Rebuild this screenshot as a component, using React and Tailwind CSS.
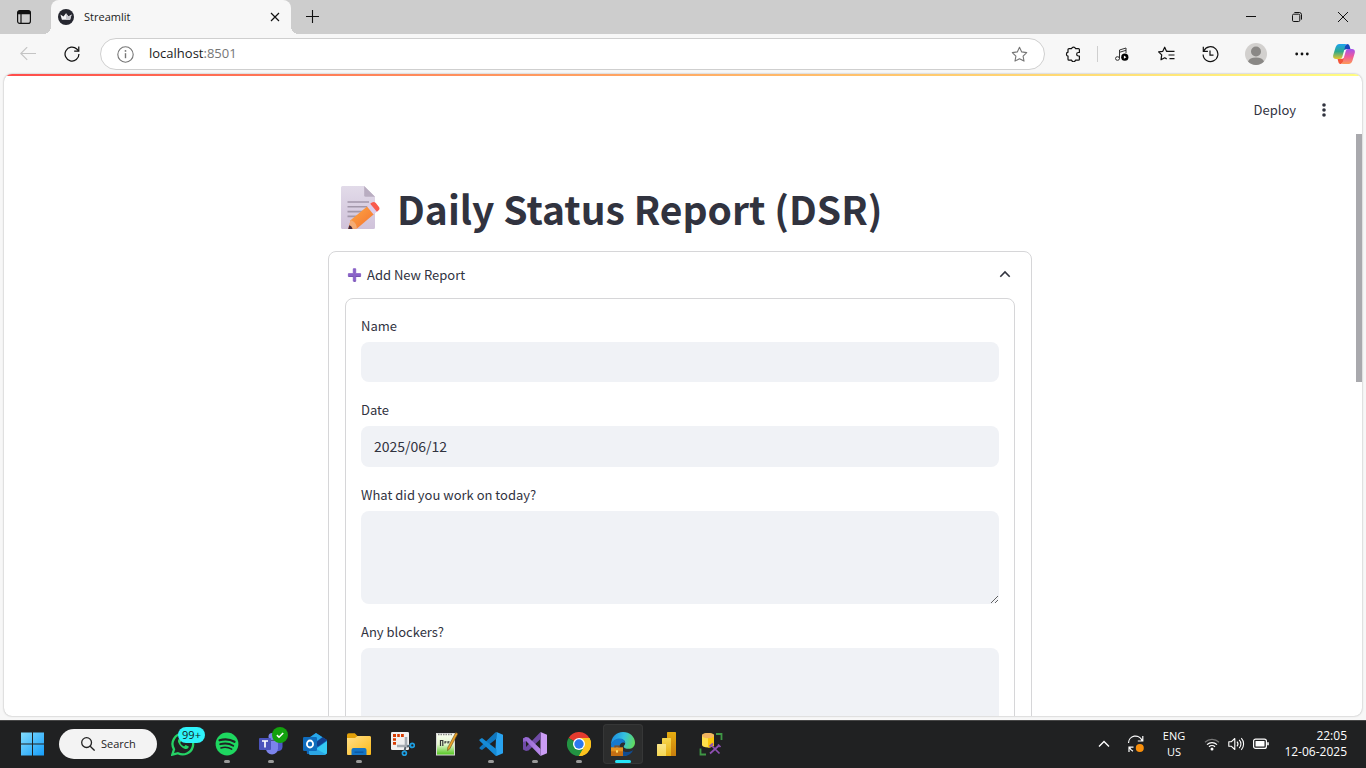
import React, { useState } from "react";

const sans = "font-['Open_Sans','Noto_Sans',sans-serif]";
const source = "font-['Noto_Sans_CJK_SC',sans-serif]";

/* ---------- browser chrome ---------- */

function TabStrip() {
  return (
    <div className="flex h-[34px] shrink-0 items-stretch bg-[#cdcdcd]">
      <button aria-label="Tab actions" className="flex w-[43px] items-center justify-center pl-[5px]">
        <svg width="16" height="16" viewBox="0 0 16 16" fill="none" stroke="#111">
          <rect x="1.6" y="1.6" width="12.8" height="12.8" rx="2.2" strokeWidth="1.2" />
          <path d="M1.5 5.2V3.6a2 2 0 0 1 2-2h9a2 2 0 0 1 2 2v1.6z" fill="#111" stroke="none" />
          <path d="M5 5v9.4" strokeWidth="1.2" />
        </svg>
      </button>
      <span className="size-2 self-end bg-[radial-gradient(circle_at_0_0,transparent_8px,#f7f7f7_8px)]" />
      <div className="flex w-60 items-center rounded-t-lg bg-[#f7f7f7] pl-[7px] pr-2">
        <svg width="16" height="16" viewBox="0 0 16 16">
          <circle cx="8" cy="8" r="8" fill="#262730" />
          <path d="M2.4 5.6 5.5 7.4 8 4.2l2.5 3.2 3.1-1.8-1.5 5.2H3.9z" fill="#f4f4f6" />
          <path d="M8 4.2l2.5 3.2 3.1-1.8-1.5 5.2H8z" fill="#c9c9d0" />
        </svg>
        <span className="ml-[10px] flex-1 text-[11px] text-[#1b1b1b]">Streamlit</span>
        <button aria-label="Close tab" className="flex size-4 items-center justify-center">
          <svg width="10" height="10" viewBox="0 0 10 10" stroke="#111" strokeWidth="1.2">
            <path d="M1 1l8 8M9 1l-8 8" />
          </svg>
        </button>
      </div>
      <span className="size-2 self-end bg-[radial-gradient(circle_at_100%_0,transparent_8px,#f7f7f7_8px)]" />
      <button aria-label="New tab" className="flex w-7 items-center justify-center">
        <svg width="14" height="14" viewBox="0 0 14 14" stroke="#111" strokeWidth="1.1">
          <path d="M6.5 0v13M0 6.500h13" />
        </svg>
      </button>
      <div className="ml-auto flex">
        <button aria-label="Minimize" className="flex w-[46px] items-center justify-center">
          <svg width="10" height="10" viewBox="0 0 10 10" stroke="#111">
            <path d="M0 4.5h10" />
          </svg>
        </button>
        <button aria-label="Restore" className="flex w-[46px] items-center justify-center">
          <svg width="10" height="10" viewBox="0 0 10 10" stroke="#111" fill="none">
            <rect x=".5" y="2.2" width="7.3" height="7.3" rx="1.2" />
            <path d="M2.4.5h4.8a2.3 2.3 0 0 1 2.3 2.3v4.8" />
          </svg>
        </button>
        <button aria-label="Close" className="flex w-[46px] items-center justify-center">
          <svg width="10" height="10" viewBox="0 0 10 10" stroke="#111">
            <path d="M0 0l10 10M10 0L0 10" />
          </svg>
        </button>
      </div>
    </div>
  );
}

function ToolButton({ label, wide, children }) {
  return (
    <button
      aria-label={label}
      className={(wide ? "w-12" : "w-11") + " flex shrink-0 items-center justify-center"}
    >
      {children}
    </button>
  );
}

const STAR = "M8.5 1.3l2.2 4.6 5 .7-3.6 3.5.9 5-4.5-2.4L4 15.100l.9-5L1.300 6.600l5-.7z";

function Toolbar() {
  return (
    <div className="flex h-10 shrink-0 items-center bg-[#f7f7f7] pl-[6px] pr-[2px]">
      <button aria-label="Back" className="flex w-11 items-center justify-center">
        <svg width="16" height="14" viewBox="0 0 16 14" fill="none" stroke="#c4c4c4" strokeWidth="1.1">
          <path d="M16 6.500H.8M7.200.1L.8 6.500l6.400 6.400" />
        </svg>
      </button>
      <button aria-label="Refresh" className="flex w-11 items-center justify-center">
        <svg width="16" height="16" viewBox="0 0 17 17" fill="none" stroke="#111" strokeWidth="1.3">
          <path d="M15.900 8.500a7.400 7.400 0 1 1-2.300-5.300l1.900 2" />
          <path d="M15.700.5v4.900h-4.900" />
        </svg>
      </button>
      <div className="ml-[6px] flex h-8 min-w-0 flex-1 items-center rounded-full border border-[#cfcfcf] bg-white pl-4 pr-4">
        <svg width="17" height="17" viewBox="0 0 17 17" fill="none" stroke="#767676">
          <circle cx="8.500" cy="8.500" r="7.700" strokeWidth="1.100" />
          <path d="M8.500 7.200v5" strokeWidth="1.400" />
          <circle cx="8.500" cy="4.900" r=".9" fill="#767676" stroke="none" />
        </svg>
        <span className="ml-[15px] flex-1 text-[13px] text-[#1b1b1b]">
          localhost<span className="text-[#767676]">:8501</span>
        </span>
        <button aria-label="Add to favorites">
          <svg width="17" height="17" viewBox="0 0 17 17" fill="none" stroke="#767676" strokeWidth="1.100" strokeLinejoin="round">
            <path d={STAR} />
          </svg>
        </button>
      </div>
      <span className="w-[6px]" />
      <ToolButton label="Extensions">
        <svg width="16" height="16" viewBox="0 0 16 16" fill="none" stroke="#111" strokeWidth="1.200" strokeLinejoin="round">
          <path d="M4 2.600h2.600a2 2 0 0 1 3.900 0h2.900a1 1 0 0 1 1 1v2.900h-1a1.700 1.700 0 0 0 0 3.500h1v3.200a1 1 0 0 1-1 1h-2.900a2 2 0 0 1-3.900 0H4a1 1 0 0 1-1-1V10.100a2 2 0 0 1 0-3.900V3.600a1 1 0 0 1 1-1z" />
        </svg>
      </ToolButton>
      <span className="ml-[2px] mr-[2px] h-4 w-px bg-[#cfcfcf]" />
      <ToolButton label="Media">
        <svg width="14" height="14" viewBox="0 0 14 14" fill="none" stroke="#333">
          <ellipse cx="2.500" cy="11.500" rx="2" ry="1.800" />
          <path d="M4.500 11.500V3l6.500-2v5M4.500 5.300l6.500-2" />
          <circle cx="9.800" cy="10.200" r="3.600" fill="#000" stroke="none" />
          <path d="M8.900 8.600v3.200l2.500-1.600z" fill="#fff" stroke="none" />
        </svg>
      </ToolButton>
      <ToolButton label="Favorites">
        <svg width="17" height="16" viewBox="0 0 17 16" fill="none" stroke="#111" strokeWidth="1.200" strokeLinejoin="round">
          <path d="M9.500 5.300h-1L6.700 1.200 4.800 5.300l-4.200.6 3.100 3-.7 4.900 3.700-2 2 1.100" />
          <path d="M9 5.400h7.500M10.500 9h6M11.500 12.600h5" />
        </svg>
      </ToolButton>
      <ToolButton label="History">
        <svg width="17" height="17" viewBox="0 0 17 17" fill="none" stroke="#111" strokeWidth="1.200">
          <path d="M1.700 5.200a7.400 7.400 0 1 1-.6 3.200" />
          <path d="M1.300.8v4.600h4.600M8 4.500v4.700h3.500" />
        </svg>
      </ToolButton>
      <ToolButton label="Profile" wide>
        <svg width="22" height="22" viewBox="0 0 22 22">
          <circle cx="11" cy="11" r="11" fill="#d2d0ce" />
          <circle cx="11" cy="8.500" r="5" fill="#8a8886" />
          <path d="M3 18.600c1-2.900 3.600-4.200 8-4.200s7 1.300 8 4.200A11 11 0 0 1 11 22a11 11 0 0 1-8-3.400z" fill="#8a8886" />
        </svg>
      </ToolButton>
      <ToolButton label="Settings and more">
        <svg width="14" height="4" viewBox="0 0 14 4" fill="#111">
          <circle cx="1.700" cy="2" r="1.400" />
          <circle cx="7" cy="2" r="1.400" />
          <circle cx="12.300" cy="2" r="1.400" />
        </svg>
      </ToolButton>
      <button aria-label="Copilot" className="flex w-10 shrink-0 items-center justify-center">
        <svg width="22" height="20" viewBox="0 0 22 20">
          <defs>
            <linearGradient id="cpA" x1="0" y1="0" x2="0" y2="1">
              <stop offset="0" stopColor="#1da4f0" />
              <stop offset=".5" stopColor="#2ea98c" />
              <stop offset="1" stopColor="#e9c52c" />
            </linearGradient>
            <linearGradient id="cpB" x1="0" y1="0" x2="0" y2="1">
              <stop offset="0" stopColor="#a452ee" />
              <stop offset=".5" stopColor="#ee5a9b" />
              <stop offset="1" stopColor="#fd9a55" />
            </linearGradient>
          </defs>
          <path d="M14 0c1.500 0 2.200.8 2.600 2.100l.9 3.100h-4.300c-1.500 0-2.300.8-2.800 2.400L9 4z" fill="#1747bd" />
          <path d="M8 20c-1.500 0-2.200-.8-2.600-2.100l-.9-3.100h4.300c1.500 0 2.300-.8 2.800-2.400L13 16z" fill="#f3553a" />
          <path d="M14 0H6.500C4.300 0 3.200 1.500 2.500 3.600L.4 10.500C-.5 13.500.6 15 3 15h3.500c1.700 0 2.400-.9 2.900-2.500l2.500-9C12.400 1.200 12.600 0 14 0z" fill="url(#cpA)" />
          <path d="M8 20h7.500c2.200 0 3.300-1.500 4-3.600l2.100-6.900C22.500 6.500 21.400 5 19 5h-3.500c-1.700 0-2.400.9-2.900 2.500l-2.500 9C9.600 18.800 9.400 20 8 20z" fill="url(#cpB)" />
        </svg>
      </button>
    </div>
  );
}

/* ---------- page ---------- */

function MemoIcon() {
  return (
    <svg width="40" height="44" viewBox="0 0 40 44" aria-hidden="true">
      <defs>
        <linearGradient id="paper" x1="0" y1="0" x2="0" y2="1">
          <stop offset="0" stopColor="#e2dbe9" />
          <stop offset="1" stopColor="#d0c2da" />
        </linearGradient>
        <linearGradient id="pencil" x1="0" y1="0" x2="1" y2="1">
          <stop offset="0" stopColor="#ffab45" />
          <stop offset="1" stopColor="#f3702f" />
        </linearGradient>
      </defs>
      <path d="M1.500 0h21.700L34 10.800v30.700a1.500 1.500 0 0 1-1.500 1.500h-31A1.500 1.500 0 0 1 0 41.500v-40A1.500 1.500 0 0 1 1.500 0z" fill="url(#paper)" />
      <path d="M23.200 0 34 10.800h-9.300a1.500 1.500 0 0 1-1.500-1.500z" fill="#b9adc1" />
      <path d="M6.500 16h21.500M6.500 20.800h20M6.500 25.600h15.500M6.500 30.400h10" stroke="#a297aa" strokeWidth="1.600" />
      <path d="M9.500 34.200 27 19.800l6.400 8-17.400 14.700-8.400.5z" fill="url(#pencil)" />
      <path d="M7.200 43l2.300-8.800c3.600.6 6.300 4 6.400 8.600z" fill="#f4ab74" />
      <path d="M7.200 43l1-3.800c1.600.4 3 1.800 3.400 3.800z" fill="#45283c" />
      <path d="M26 20.600l3.800-3.300 6.600 7.900-3.900 3.400z" fill="#dccdeb" />
      <path d="M29.200 17.800l1.700-1.200c1.400-1 2.800-.8 3.900.5l3 3.600c1.100 1.400.9 2.700-.4 3.800l-1.500 1.300z" fill="#f95b4e" />
    </svg>
  );
}

function Field({ id, label, children }) {
  return (
    <div className="flex flex-col gap-1">
      <label htmlFor={id} className="text-[13px] leading-6">
        {label}
      </label>
      {children}
    </div>
  );
}

function StatusPage() {
  const [open, setOpen] = useState(true);
  return (
    <div className={source + " mx-1 mb-1 flex min-h-0 flex-1 flex-col overflow-hidden rounded-lg bg-white text-[#31333f] shadow-[0_0_2px_rgba(0,0,0,0.35)]"}>
      <div className="h-[2px] shrink-0 bg-linear-to-r from-[#ff4b4b] to-[#fffd80]" />
      <header className="flex h-[58px] shrink-0 items-center justify-end gap-4 pr-[26px] pt-[10px]">
        <button className="h-6 text-[13px] leading-6">Deploy</button>
        <button aria-label="Main menu" className="flex size-6 items-center justify-center">
          <svg width="4" height="14" viewBox="0 0 4 14" fill="#31333f">
            <circle cx="2" cy="2" r="1.800" />
            <circle cx="2" cy="7" r="1.800" />
            <circle cx="2" cy="12" r="1.800" />
          </svg>
        </button>
      </header>
      <div className="flex min-h-0 flex-1">
        <main className="min-w-0 flex-1 overflow-hidden">
          <div className="mx-auto max-w-[704px] pt-[45px]">
            <h1 className="flex h-[72px] items-start gap-4 pl-[13px] pt-[7px] text-[39px] font-bold leading-[44px]">
              <MemoIcon />
              <span className="flex-1">Daily Status Report (DSR)</span>
            </h1>
            <section className="rounded-lg border border-[#d6d6d8] px-4 pb-4">
              <button
                onClick={() => setOpen(!open)}
                aria-expanded={open}
                className="flex h-[46px] w-full items-center text-left text-[13px]"
              >
                <svg width="18" height="14" viewBox="0 0 18 14" aria-hidden="true">
                  <path d="M8.300.8h2.400v4.900h4.900v2.600h-4.900v4.900H8.300V8.300H3.400V5.700h4.900z" fill="#8a63c7" stroke="#8a63c7" strokeLinejoin="round" />
                  <path d="M3.500 8.500h5M10.500 8.500h5M9 13.300h1.500" stroke="#6b4aa8" strokeWidth=".8" />
                </svg>
                <span className="ml-1 flex-1">Add New Report</span>
                <svg width="20" height="10" viewBox="0 0 20 10" fill="none" stroke="#31333f" strokeWidth="1.600">
                  <path d="M5.300 6.700 10 2l4.700 4.700" />
                </svg>
              </button>
              {open && (
                <form className="flex flex-col gap-4 rounded-lg border border-[#d6d6d8] p-[15px]" onSubmit={(e) => e.preventDefault()}>
                  <Field id="name" label="Name">
                    <input id="name" type="text" className="h-10 w-full rounded-lg bg-[#f0f2f6] px-[13px] pb-[2px] text-[14px]" />
                  </Field>
                  <Field id="date" label="Date">
                    <input id="date" type="text" defaultValue="2025/06/12" className="h-[41px] w-full rounded-lg bg-[#f0f2f6] px-[13px] pb-[2px] text-[14px]" />
                  </Field>
                  <Field id="work" label="What did you work on today?">
                    <textarea id="work" className="h-[93px] w-full resize-y rounded-lg bg-[#f0f2f6] px-[13px] py-2 text-[14px]" />
                  </Field>
                  <Field id="blockers" label="Any blockers?">
                    <textarea id="blockers" className="h-[93px] w-full resize-y rounded-lg bg-[#f0f2f6] px-[13px] py-2 text-[14px]" />
                  </Field>
                </form>
              )}
            </section>
          </div>
        </main>
        <div className="w-[6px] shrink-0">
          <div className="h-[248px] bg-[#a9a9ad]" />
        </div>
      </div>
    </div>
  );
}

/* ---------- taskbar ---------- */

function TaskItem({ label, state, badge, children }) {
  return (
    <button aria-label={label} className="relative flex h-full w-11 shrink-0 items-center justify-center">
      <span className={(state === "active" ? "bg-[#2c2d2d] ring-1 ring-inset ring-[#363737]" : "") + " flex size-10 flex-col items-center rounded pt-2"}>
        <svg width="24" height="24" viewBox="0 0 24 24" aria-hidden="true">
          {children}
        </svg>
        {state === "running" && <span className="mt-1 h-[3px] w-[6px] rounded-full bg-[#9a9a9a]" />}
        {state === "active" && <span className="mt-1 h-[3px] w-4 rounded-full bg-[#27e4f7]" />}
      </span>
      {badge}
    </button>
  );
}

function Gradients() {
  return (
    <svg className="absolute size-0" aria-hidden="true">
      <defs>
        <linearGradient id="win" x1="0" y1="0" x2="1" y2="1">
          <stop offset="0" stopColor="#82dcfd" />
          <stop offset="1" stopColor="#159dfa" />
        </linearGradient>
        <linearGradient id="folder" x1="0" y1="0" x2="1" y2="1">
          <stop offset="0" stopColor="#ffe08a" />
          <stop offset="1" stopColor="#fbb918" />
        </linearGradient>
        <linearGradient id="edgeTop" x1="0" y1=".4" x2="1" y2=".6">
          <stop offset="0" stopColor="#1c8de0" />
          <stop offset=".5" stopColor="#35c1e0" />
          <stop offset="1" stopColor="#62dc5a" />
        </linearGradient>
        <linearGradient id="vsPurple" x1="0" y1="0" x2="1" y2="0">
          <stop offset="0" stopColor="#8f62cc" />
          <stop offset="1" stopColor="#b98aec" />
        </linearGradient>
        <linearGradient id="npp" x1="0" y1="0" x2="0" y2="1">
          <stop offset="0" stopColor="#fbfff2" />
          <stop offset=".5" stopColor="#e4f7cf" />
          <stop offset="1" stopColor="#4fc51b" />
        </linearGradient>
        <linearGradient id="pbiA" x1="0" y1="0" x2="0" y2="1">
          <stop offset="0" stopColor="#e6ad10" />
          <stop offset="1" stopColor="#c87e0e" />
        </linearGradient>
        <linearGradient id="pbiB" x1="0" y1="0" x2="0" y2="1">
          <stop offset="0" stopColor="#f6d751" />
          <stop offset="1" stopColor="#e6ad10" />
        </linearGradient>
        <linearGradient id="pbiC" x1="0" y1="0" x2="0" y2="1">
          <stop offset="0" stopColor="#f9e589" />
          <stop offset="1" stopColor="#f6d751" />
        </linearGradient>
      </defs>
    </svg>
  );
}

function Taskbar() {
  return (
    <footer className="flex h-12 shrink-0 items-stretch bg-[#202122] pl-[10px] pr-[19px] text-white shadow-[inset_0_1px_0_#474747]">
      <Gradients />
      <TaskItem label="Start">
        <path d="M1 .500h11v11H1zM13 .500h11v11H13zM1 12.500h11v11H1zM13 12.500h11v11H13z" fill="url(#win)" />
      </TaskItem>
      <button className="ml-[5px] mr-1 flex h-[30px] w-[98px] items-center self-center rounded-full bg-[#f3f3f3] pl-[22px] text-[#1d1d1d]">
        <svg width="14" height="14" viewBox="0 0 14 14" fill="none" stroke="#222" strokeWidth="1.300">
          <circle cx="5.600" cy="5.600" r="4.900" />
          <path d="M9.200 9.200l4.400 4.400" />
        </svg>
        <span className="ml-[6px] text-[11px]">Search</span>
      </button>
      <TaskItem
        label="WhatsApp"
        badge={<span className="absolute left-[17px] top-[7px] flex h-4 w-[27px] items-center justify-center rounded-full bg-[#2ff3fa] text-[11px] text-[#122]">99+</span>}
      >
        <path d="M12 1.600A10.400 10.400 0 0 0 3 17.300L1.300 22.700l5.600-1.500A10.400 10.400 0 1 0 12 1.600z" fill="none" stroke="#25d366" strokeWidth="2.300" />
        <path d="M8.300 6.500c-1.300.8-1.700 2.300-.9 4.300 1.300 3 3.600 5.200 6.700 6.100 2 .5 3.500-.4 3.700-2.300l-3.200-1.700-1.500 1.500c-1.900-.8-3-2-3.900-3.700l1-1.300z" fill="#25d366" />
      </TaskItem>
      <TaskItem label="Spotify" state="running">
        <circle cx="12" cy="12" r="11.400" fill="#1ed760" />
        <path d="M4.500 8.300c5.200-1.500 10.600-1 15 1.500" stroke="#202124" strokeWidth="2.200" strokeLinecap="round" fill="none" />
        <path d="M5.200 12.200c4.600-1.300 9.200-.8 13 1.500" stroke="#202124" strokeWidth="1.900" strokeLinecap="round" fill="none" />
        <path d="M5.900 15.900c3.800-1 7.500-.7 10.800 1.200" stroke="#202124" strokeWidth="1.500" strokeLinecap="round" fill="none" />
      </TaskItem>
      <TaskItem
        label="Teams"
        state="running"
        badge={
          <svg width="16" height="16" viewBox="0 0 16 16" className="absolute left-[23px] top-[7px]" aria-hidden="true">
            <circle cx="8" cy="8" r="8" fill="#13a10e" />
            <path d="M4.900 8.100l2.100 2.100 4.200-4.200" fill="none" stroke="#fff" strokeWidth="1.600" />
          </svg>
        }
      >
        <circle cx="13" cy="4.500" r="3.500" fill="#7b83eb" />
        <path d="M15 8h8.500v7a4.600 4.600 0 0 1-8.500 2z" fill="#5059c9" />
        <path d="M7 8.500h12v8a6 6 0 0 1-12 0z" fill="#7b83eb" />
        <rect x="0" y="6" width="12" height="12" rx="1" fill="#4b53bc" />
        <path d="M3 9h6M6 9v6.600" stroke="#fff" strokeWidth="1.700" />
      </TaskItem>
      <TaskItem label="Outlook">
        <path d="M2.500 8 13 1l11 7v14H4z" fill="#1067bb" />
        <path d="M6 6l7-5 6.500 4.200-8 5.300z" fill="#28a8ea" />
        <path d="M11 12l8.500-6.800L24 8l-9 6.500z" fill="#123f8c" />
        <path d="M6 21.500 24 9v11.500a2 2 0 0 1-2 2H7z" fill="#35c9f4" />
        <path d="M6 13l17 9.300a2 2 0 0 1-1.500.7H7.500A1.500 1.500 0 0 1 6 21.500z" fill="#2ba6e5" />
        <rect x="0" y="5" width="14" height="14" rx="1.200" fill="#0f6cbd" />
        <ellipse cx="7" cy="12" rx="3.100" ry="3.500" fill="none" stroke="#fff" strokeWidth="1.800" />
      </TaskItem>
      <TaskItem label="File Explorer" state="running">
        <path d="M0 3a1.800 1.800 0 0 1 1.800-1.800h6L10.500 4H22a2 2 0 0 1 2 2v3H0z" fill="#e2a008" />
        <path d="M0 6h8l2.500-2H22.500A1.500 1.500 0 0 1 24 5.500V22a.9.9 0 0 1-.9.900H.9A.9.9 0 0 1 0 22z" fill="url(#folder)" />
        <path d="M4.500 23v-5a2 2 0 0 1 2-2h11a2 2 0 0 1 2 2v5z" fill="#1475c5" />
        <path d="M7.500 19.500h9v1.300h-9z" fill="#0b559c" />
      </TaskItem>
      <TaskItem label="Snipping Tool">
        <rect x="0" y="0" width="18" height="18" rx="1.300" fill="#f1f1f1" />
        <path d="M2 2h3v3H2zM6.200 2h2.600v3H6.200zM10 2h2.800v3H10zM2 6.200h3v2.600H2zM2 10h3v2.800H2z" fill="#d83b01" />
        <path d="M15 5v10M6 14h12" stroke="#a6acb2" strokeWidth="2.600" fill="none" />
        <path d="M14.500 15l-1 4M16 14.500l4-1" stroke="#59646d" strokeWidth="2" />
        <circle cx="21.300" cy="13.400" r="2" fill="none" stroke="#1d9fe2" strokeWidth="1.700" />
        <circle cx="13.400" cy="21.300" r="2" fill="none" stroke="#1d9fe2" strokeWidth="1.700" />
      </TaskItem>
      <TaskItem label="Notepad++">
        <rect x="1.500" y="1.500" width="18" height="21.500" fill="url(#npp)" stroke="#d8d8d8" />
        <path d="M3 2.500h15" stroke="#888" strokeDasharray="1.500 1" strokeWidth="1.400" />
        <path d="M5.500 14V8.500h2.300V14M10 11.500V9.800h1.500M13 11.500V9.800h1.500" fill="none" stroke="#333" strokeWidth="1.200" />
        <path d="M20.800.5l2 1.300-8 15-2.300 1.800.3-3.200z" fill="#e8a32b" stroke="#6d4a17" strokeWidth=".6" />
      </TaskItem>
      <TaskItem label="Visual Studio Code" state="running">
        <path d="M17.500 0 24 2.800v18.400L17.500 24l-1.200-1 .7-16.500z" fill="#29a3f0" />
        <path d="M17.500 0v6.700L3 18l-2-1a1.200 1.200 0 0 1-.2-1.800L16.300.6z" fill="#0f76be" />
        <path d="M17.500 24v-6.700L3 6 .9 7.200A1.200 1.200 0 0 0 .8 9l15.500 14.400z" fill="#168bd6" />
      </TaskItem>
      <TaskItem label="Visual Studio" state="running">
        <path d="M17.500 0 24 2.700v18.600L17.500 24z" fill="#cb9df5" />
        <path d="M17.500 0v7L5.500 18.600 3 19 0 17.500V6.500L3 5v10z" fill="#6f4aa6" />
        <path d="M0 6.500 3 5l2.500.4 12 11.600v7L3 9 0 10z" fill="url(#vsPurple)" />
      </TaskItem>
      <TaskItem label="Chrome" state="running">
        <path d="M12 12 1.600 6A12 12 0 0 1 22.400 6z" fill="#e33b2e" />
        <path d="M12 12V6h10.400A12 12 0 0 1 12 24l-1-1z" fill="#fcc31e" />
        <path d="M12 12l5.200 3L12 24A12 12 0 0 1 1.600 6z" fill="#229342" />
        <path d="M12 6h10.400A12 12 0 0 1 12 24l5.200-9z" fill="#fcc31e" />
        <circle cx="12" cy="12" r="6" fill="#fff" />
        <circle cx="12" cy="12" r="4.700" fill="#2b78ee" />
      </TaskItem>
      <TaskItem label="Edge" state="active">
        <path d="M0 13C0 5 5.300 0 12 0s12 4.800 12 10.500c0 4.200-3 6.300-6.300 6.300-3 0-5-1.200-5-2.400 0-.8 1.500-1.300 1.500-3.400 0-2-2-4-5.500-4C4.800 7 1.500 9.300 0 13z" fill="url(#edgeTop)" />
        <path d="M0 13c1-4.300 4.600-6.500 8.500-6.500C12 6.500 14 8.500 14.200 11c-1-1.200-5.700-.8-5.700 4.300 0 4 3.500 8 7.500 8.400C5 25.500 0 19 0 13z" fill="#1479cf" />
        <path d="M9 13c-1 5 4 7.500 8 7 2-.2 3.800-1 5.300-2-2 4-5.500 6-9.300 6-4-.5-6.500-6-4-11z" fill="#104c91" />
        <rect x="0" y="15.500" width="12" height="8.500" fill="#c56e12" />
        <path d="M0 15.500h12v3.800H0z" fill="#e69320" />
        <path d="M4 15.500v-1.300h4v1.300" fill="none" stroke="#934b0a" strokeWidth="1.200" />
        <rect x="5" y="18.300" width="2" height="2.300" fill="#ffe06b" />
      </TaskItem>
      <TaskItem label="Power BI">
        <rect x="12" y="0" width="9" height="24" rx=".6" fill="url(#pbiA)" />
        <path d="M7 6.600a.6.600 0 0 1 .6-.6h7.800a.6.600 0 0 1 .6.600V24H7z" fill="url(#pbiB)" />
        <path d="M2 12.600a.6.600 0 0 1 .6-.6h7.800a.6.600 0 0 1 .6.600V24H2.600a.6.600 0 0 1-.6-.6z" fill="url(#pbiC)" />
      </TaskItem>
      <TaskItem label="SQL Server Management Studio">
        <path d="M3 3.500c0-1.500 2.500-2.500 6-2.500s6 1 6 2.500V13c0 1.500-2.500 2.500-6 2.500S3 14.500 3 13z" fill="#ffe04a" />
        <path d="M9 5.500c3 0 6-.7 6-2V13c0 1.500-2.500 2.500-6 2.500z" fill="#fbc60a" />
        <ellipse cx="9" cy="3.600" rx="6" ry="2.600" fill="#f2b360" />
        <path d="M17 2h5.500v6M1.500 16.500v6H7" fill="none" stroke="#3f9745" strokeWidth="1.800" />
        <path d="M11 21.500l9-8M12.500 13.500l8 8M10.500 14.500l3.500-3M19 12.500l2.500 2.500" stroke="#9050b4" strokeWidth="1.700" />
      </TaskItem>

      <div className="ml-auto flex items-center">
        <button aria-label="Show hidden icons" className="flex w-8 items-center justify-center">
          <svg width="12" height="8" viewBox="0 0 12 8" fill="none" stroke="#fff" strokeWidth="1.400">
            <path d="M1 6.500l5-5 5 5" />
          </svg>
        </button>
        <button aria-label="Windows Update" className="flex w-8 items-center justify-center">
          <svg width="18" height="18" viewBox="0 0 18 18" fill="none" stroke="#fff" strokeWidth="1.200">
            <path d="M1.500 8A7 7 0 0 1 15 5.500M15.800 1v5h-5M6 16.200A7 7 0 0 1 2.500 12.600M2 17v-4.800h4.500" />
            <circle cx="12.800" cy="13" r="4" fill="#f98f0b" stroke="none" />
          </svg>
        </button>
        <button className="flex w-11 flex-col items-center text-[11px] leading-4">
          <span>ENG</span>
          <span>US</span>
        </button>
        <button aria-label="Network, volume and battery" className="ml-1 flex w-[72px] items-center justify-center gap-2">
          <svg width="16" height="16" viewBox="0 0 16 16" fill="none" stroke="#fff" strokeWidth="1.200">
            <path d="M1 6.300a10 10 0 0 1 14 0" stroke="#777" />
            <path d="M3 8.600a7.200 7.200 0 0 1 10 0M5 10.800a4.300 4.300 0 0 1 6 0" />
            <circle cx="8" cy="12.900" r="1.500" fill="#fff" stroke="none" />
          </svg>
          <svg width="17" height="16" viewBox="0 0 17 16" fill="none" stroke="#fff" strokeWidth="1.100" strokeLinejoin="round">
            <path d="M.8 5.800h2.400l3.600-3.300v11L3.200 10.200H.8zM9 5.700a3.500 3.500 0 0 1 0 4.600M11.200 3.800a6 6 0 0 1 0 8.400M13.300 2.200a8.500 8.500 0 0 1 0 11.600" />
          </svg>
          <svg width="16" height="16" viewBox="0 0 16 16" fill="none" stroke="#fff" strokeWidth="1.200">
            <rect x=".6" y="3.100" width="12.800" height="9.300" rx="2" />
            <rect x="2.500" y="5" width="9" height="5.500" rx=".5" fill="#fff" stroke="none" />
            <path d="M15 6.300v3" strokeWidth="1.600" />
          </svg>
        </button>
        <button className="flex w-[75px] flex-col items-end text-[12px] leading-4">
          <span>22:05</span>
          <span>12-06-2025</span>
        </button>
      </div>
    </footer>
  );
}

export default function App() {
  return (
    <div className={sans + " flex h-screen flex-col overflow-hidden bg-[#f7f7f7]"}>
      <TabStrip />
      <Toolbar />
      <StatusPage />
      <Taskbar />
    </div>
  );
}
